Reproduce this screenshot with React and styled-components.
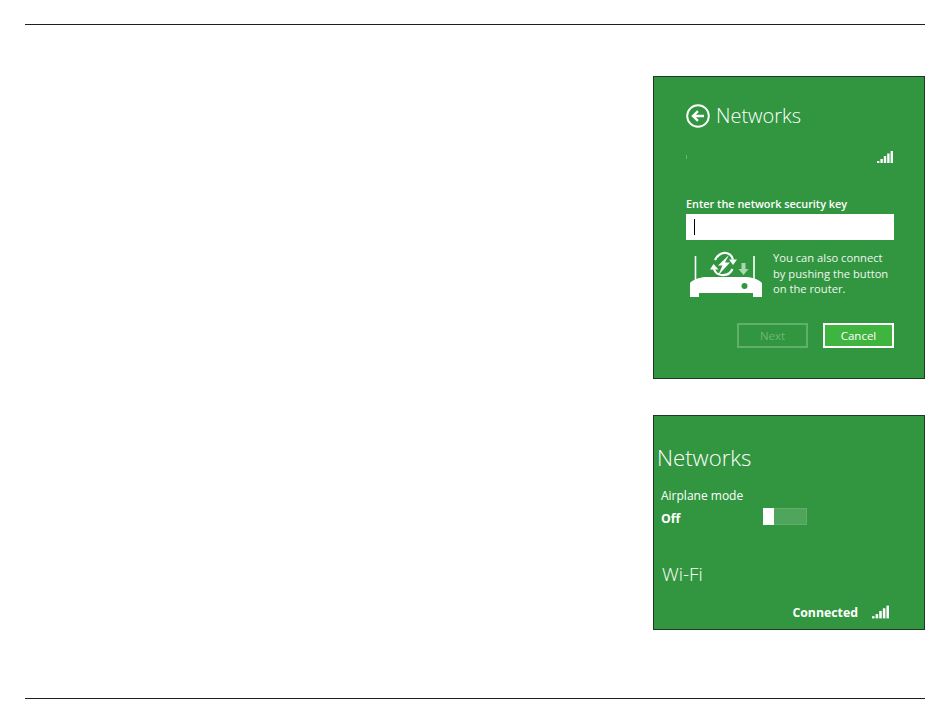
import React from 'react';
import styled, { createGlobalStyle } from 'styled-components';

const GlobalStyle = createGlobalStyle`
  html, body {
    margin: 0;
    padding: 0;
    background: #fff;
    font-family: "Open Sans", "Liberation Sans", sans-serif;
  }
`;

const Page = styled.div`
  width: 950px;
  height: 725px;
  box-sizing: border-box;
  padding: 24px 25px 0;
  display: flex;
  flex-direction: column;
`;

const Rule = styled.div`
  height: 1px;
  background: #231f20;
`;

const Content = styled.main`
  flex: 0 0 673px;
  box-sizing: border-box;
  padding-top: 51px;
  display: flex;
  flex-direction: column;
  align-items: flex-end;
  gap: 36px;
`;

const Panel = styled.section`
  width: 272px;
  height: ${p => p.$height}px;
  box-sizing: border-box;
  background: #329640;
  border: 1px solid #1f3a24;
  color: #fff;
  display: flex;
  flex-direction: column;
  padding: ${p => p.$padding};
`;

const Header = styled.div`
  display: flex;
  align-items: center;
  gap: 6px;
  height: 26px;
`;

const Title = styled.h2`
  margin: 0;
  font-weight: 300;
  font-size: ${p => p.$size}px;
  line-height: 26px;
`;

const SignalRow = styled.div`
  display: flex;
  justify-content: space-between;
  align-items: flex-end;
  margin-top: 20px;
  padding-right: 1px;
  height: 14px;
`;

const Speck = styled.span`
  width: 1px;
  height: 4px;
  margin-bottom: 4px;
  background: rgba(255, 255, 255, 0.3);
`;

const KeyLabel = styled.label`
  display: block;
  margin-top: 33px;
  font-size: 10.9px;
  line-height: 16px;
  font-weight: 600;
`;

const KeyInput = styled.div`
  margin-top: 2px;
  height: 26px;
  background: #fff;
  display: flex;
  align-items: center;
  padding-left: 8px;
`;

const Caret = styled.span`
  width: 1px;
  height: 16px;
  background: #000;
`;

const RouterRow = styled.div`
  display: flex;
  margin-top: 10px;
  height: 48px;
`;

const RouterIcon = styled.svg`
  flex: none;
  margin-left: 3px;
`;

const RouterText = styled.p`
  margin: 0 0 0 10px;
  font-size: 11.2px;
  line-height: 15.5px;
  color: #eef7ef;
`;

const ButtonRow = styled.div`
  display: flex;
  justify-content: flex-end;
  gap: 15px;
  margin-top: 25px;
`;

const Button = styled.button`
  width: 71px;
  height: 25px;
  box-sizing: border-box;
  padding: 0;
  font-family: inherit;
  font-size: 11.5px;
  color: ${p => (p.disabled ? '#6cb775' : '#fff')};
  background: ${p => (p.disabled ? 'transparent' : '#3fb540')};
  border: 2px solid ${p => (p.disabled ? '#60b06b' : '#fff')};
`;

const ModeLabel = styled.div`
  margin-top: 16px;
  padding-left: 4px;
  font-size: 12px;
  line-height: 18px;
`;

const ModeRow = styled.div`
  display: grid;
  grid-template-columns: 102px 44px;
  align-items: start;
  margin-top: 3px;
  padding-left: 4px;
  height: 19px;
`;

const StateText = styled.span`
  font-size: 12.3px;
  font-weight: 700;
`;

const OffText = styled(StateText)`
  align-self: center;
  margin-top: 2px;
`;

const Toggle = styled.div`
  height: 17px;
  box-sizing: border-box;
  display: flex;
  background: #4ea55b;
  border: 1px solid #60b06b;
  border-left: 0;
`;

const Thumb = styled.span`
  width: 11px;
  margin: -1px 0;
  background: #fff;
`;

const WifiTitle = styled(Title)`
  margin-top: 34px;
  padding-left: 5px;
`;

const StatusRow = styled.div`
  display: flex;
  justify-content: flex-end;
  align-items: center;
  gap: 14px;
  margin-top: 17px;
  padding-right: 35px;
  height: 16px;
`;

const Signal = ({ width = 16, height = 12 }) => {
  const bars = [[0, 10, 2], [3.4, 8, 4], [6.8, 5, 7], [10.2, 2.5, 9.5], [13.6, 0, 12]];
  return (
    <svg width={width} height={height} viewBox="0 0 16 12" fill="#fff">
      {bars.map(([x, y, h]) => (
        <rect key={x} x={x} y={y} width="2.4" height={h} />
      ))}
    </svg>
  );
};

const BackIcon = () => (
  <svg width="24" height="24" viewBox="0 0 24 24" fill="none" stroke="#fff">
    <circle cx="12" cy="12" r="10.8" strokeWidth="1.9" />
    <path d="M18 12H7.500M12 7.200 7 12l5 4.800" strokeWidth="2.4" />
  </svg>
);

const Router = () => (
  <RouterIcon width="74" height="48" viewBox="0 0 74 48">
    <path d="M6.500 6v24M65 6v24" stroke="#fff" strokeWidth="1.6" />
    <path
      d="M1 33C4 29.500 10 27.500 16 27H58C64 27.500 70 29.500 73 33V47H64V43H10V47H1Z"
      fill="#fff"
    />
    <circle cx="55.500" cy="36" r="3" fill="#329640" />
    <path d="M52.500 13h4v6h3l-5 6-5-6h3Z" fill="#a9d8ae" />
    <path
      d="M26 10C28 5 33 2.500 37 3 40.500 3.500 43 6 44 9.500M43.500 19C41.500 23.500 37 25.500 32.500 25 28.500 24.500 26 22 25 19"
      fill="none"
      stroke="#fff"
      strokeWidth="2.2"
    />
    <path d="M40 9.500 48 9.500 44 15ZM21 19.500 29.500 19.500 24.500 14Z" fill="#fff" />
    <path d="M40 5 29 15.500H33.500L29 25.500 41 12.500H36Z" fill="#fff" />
  </RouterIcon>
);

const App = () => (
  <>
    <GlobalStyle />
    <Page>
      <Rule />
      <Content>
        <Panel $height={303} $padding="26px 30px 0 32px">
          <Header>
            <BackIcon />
            <Title $size={20}>Networks</Title>
          </Header>
          <SignalRow>
            <Speck />
            <Signal />
          </SignalRow>
          <KeyLabel>Enter the network security key</KeyLabel>
          <KeyInput>
            <Caret />
          </KeyInput>
          <RouterRow>
            <Router />
            <RouterText>
              You can also connect
              <br />
              by pushing the button
              <br />
              on the router.
            </RouterText>
          </RouterRow>
          <ButtonRow>
            <Button disabled>Next</Button>
            <Button>Cancel</Button>
          </ButtonRow>
        </Panel>
        <Panel $height={215} $padding="29px 0 0 3px">
          <Title $size={22.2}>Networks</Title>
          <ModeLabel>Airplane mode</ModeLabel>
          <ModeRow>
            <OffText>Off</OffText>
            <Toggle>
              <Thumb />
            </Toggle>
          </ModeRow>
          <WifiTitle $size={18.8}>Wi-Fi</WifiTitle>
          <StatusRow>
            <StateText>Connected</StateText>
            <Signal width={17} height={14} />
          </StatusRow>
        </Panel>
      </Content>
      <Rule />
    </Page>
  </>
);

export default App;
